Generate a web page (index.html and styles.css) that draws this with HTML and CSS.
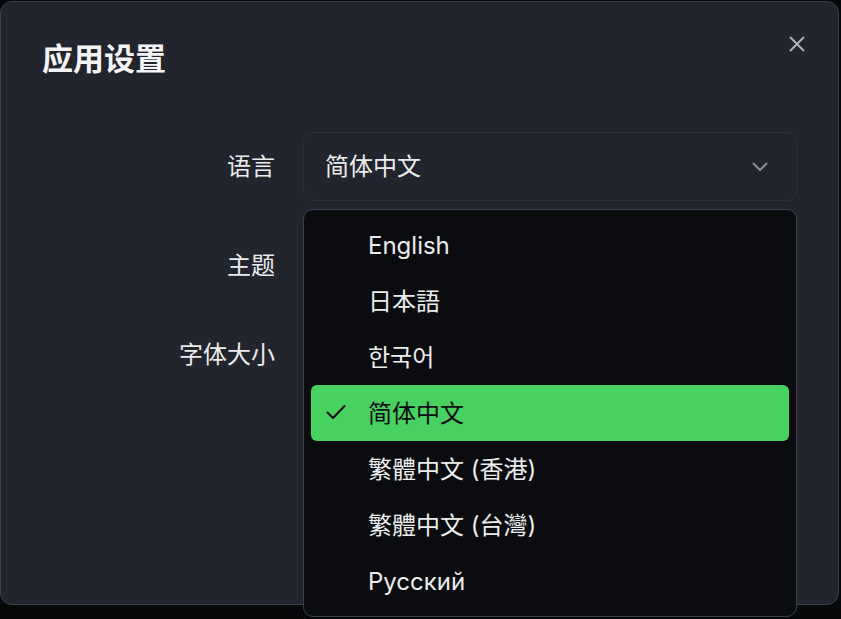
FILE: index.html
```html
<!DOCTYPE html>
<html lang="zh-CN">
<head>
<meta charset="utf-8">
<title>应用设置</title>
<link rel="stylesheet" href="styles.css">
</head>
<body>
<div class="modal">
  <h1 class="title">应用设置</h1>
  <button class="close" aria-label="关闭">
    <svg width="16" height="16" viewBox="0 0 16 16"><path d="M1.5 1.5 L14.5 14.5 M14.5 1.5 L1.5 14.5" stroke="currentColor" stroke-width="1.8" stroke-linecap="round" fill="none"/></svg>
  </button>
  <div class="form">
    <div class="row row-lang">
      <label class="label">语言</label>
      <div class="control">
        <div class="select">
          <span class="value">简体中文</span>
          <svg class="chev" width="16" height="10" viewBox="0 0 16 10"><path d="M1.5 1.5 L8 8 L14.5 1.5" stroke="currentColor" stroke-width="2" stroke-linecap="round" stroke-linejoin="round" fill="none"/></svg>
        </div>
        <ul class="menu">
          <li class="item"><span class="mark"></span><span>English</span></li>
          <li class="item cjk" lang="ja"><span class="mark"></span><span>日本語</span></li>
          <li class="item cjk" lang="ko"><span class="mark"></span><span>한국어</span></li>
          <li class="item cjk selected"><span class="mark"><svg width="20" height="16" viewBox="0 0 20 16"><path d="M1.5 8.5 L7 14 L18.5 2" stroke="currentColor" stroke-width="2" stroke-linecap="round" stroke-linejoin="round" fill="none"/></svg></span><span>简体中文</span></li>
          <li class="item cjk" lang="zh-HK"><span class="mark"></span><span>繁體中文 (香港)</span></li>
          <li class="item cjk" lang="zh-TW"><span class="mark"></span><span>繁體中文 (台灣)</span></li>
          <li class="item" lang="ru"><span class="mark"></span><span>Русский</span></li>
        </ul>
      </div>
    </div>
    <div class="row row-theme">
      <label class="label">主题</label>
      <div class="control"><div class="select"><span class="value">深色</span></div></div>
    </div>
    <div class="row row-size">
      <label class="label">字体大小</label>
      <div class="control"><div class="select"><span class="value">中</span></div></div>
    </div>
  </div>
</div>
</body>
</html>
```

FILE: styles.css
```css
html, body {
  margin: 0;
  padding: 0;
}
body {
  background: #07080a;
  font-family: Inter, "Noto Sans CJK SC", sans-serif;
  color: #ececee;
  width: 841px;
  height: 619px;
  overflow: hidden;
}
[lang="ja"] { font-family: Inter, "Noto Sans CJK JP", sans-serif; }
[lang="ko"] { font-family: Inter, "Noto Sans CJK KR", sans-serif; }
[lang="zh-HK"], [lang="zh-TW"] { font-family: Inter, "Noto Sans CJK TC", sans-serif; }

.modal {
  position: relative;
  box-sizing: border-box;
  width: 839px;
  height: 604px;
  margin-top: 1px;
  border: 1px solid #3b404c;
  border-radius: 12px;
  background: #22252d;
  padding: 0 41px;
}
.title {
  margin: 37px 0 0 0;
  height: 40px;
  line-height: 40px;
  font-size: 31px;
  font-weight: 700;
  color: #f4f4f6;
}
.close {
  position: absolute;
  top: 30px;
  right: 29px;
  width: 24px;
  height: 24px;
  padding: 0;
  border: 0;
  background: none;
  color: #b3b6bc;
  display: flex;
  align-items: center;
  justify-content: center;
}
.form {
  margin-top: 53px;
}
.row {
  display: grid;
  grid-template-columns: 233px 494px;
  column-gap: 28px;
  align-items: center;
  height: 69px;
}
.row-theme { margin-top: 30px; }
.row-size { margin-top: 20px; }
.label {
  text-align: right;
  font-size: 24px;
  color: #ececee;
  padding-bottom: 4px;
}
.control {
  position: relative;
  height: 69px;
}
.select {
  box-sizing: border-box;
  height: 69px;
  border: 1px solid #2c3039;
  border-radius: 10px;
  background: #22252d;
  display: flex;
  align-items: center;
  justify-content: space-between;
  padding: 0 28px 0 21px;
  font-size: 24px;
  color: #ececee;
}
.value {
  padding-bottom: 4px;
}
.chev {
  color: #8a8e95;
}
.menu {
  position: absolute;
  z-index: 2;
  top: 77px;
  left: 0;
  box-sizing: border-box;
  width: 494px;
  margin: 0;
  padding: 7px;
  list-style: none;
  background: #0b0c0f;
  border: 1px solid #3b404c;
  border-radius: 10px;
}
.item {
  height: 56px;
  display: flex;
  align-items: center;
  padding-left: 15px;
  border-radius: 6px;
  font-size: 24px;
  color: #ececee;
}
.item.cjk {
  padding-bottom: 3px;
  box-sizing: border-box;
}
.mark {
  width: 42px;
  flex: none;
  display: flex;
  align-items: center;
}
.item.selected {
  background: #46d160;
  color: #0b0c0f;
}
```
